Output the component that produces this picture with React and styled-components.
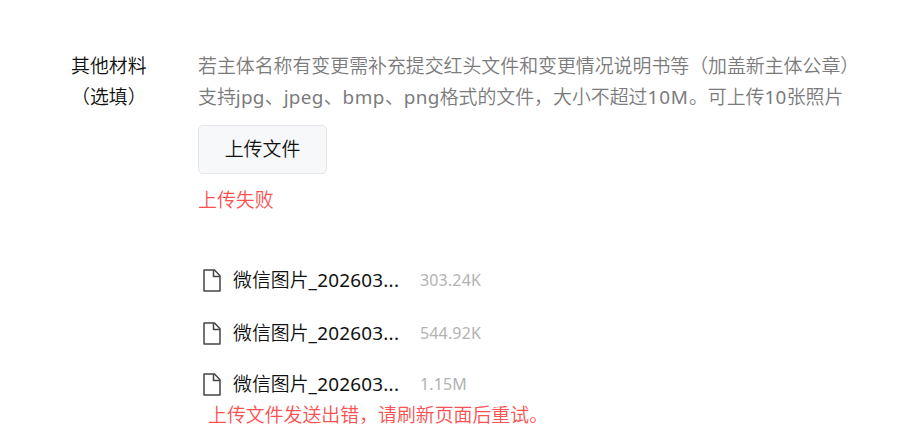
import React from "react";
import styled, { createGlobalStyle } from "styled-components";

const GlobalStyle = createGlobalStyle`
  * { box-sizing: border-box; }
  body {
    margin: 0;
    background: #fff;
    font-family: "Noto Sans", "Noto Sans CJK SC", sans-serif;
    font-size: 18.9px;
    font-weight: 350;
    line-height: 31px;
    color: #111;
  }
`;

const Field = styled.section`
  display: flex;
  width: 924px;
  height: 443px;
  padding: 51px 0 0 71px;
  overflow: hidden;
  white-space: nowrap;
`;

const Label = styled.div`
  width: 76px;
  margin-right: 51px;
`;

const LabelLine = styled.p`
  margin: 0;
`;

const Content = styled.div`
  flex: 1;
`;

const Hint = styled.p`
  margin: 0;
  color: #7b7b7b;
`;

const Latin = styled.span`
  font-weight: 400;
  letter-spacing: ${(p) => p.$spacing ?? 0.3}px;
`;

const UploadButton = styled.button`
  display: block;
  width: 129px;
  height: 49px;
  margin: 12px 0 11px;
  padding: 0;
  border: 1px solid #e3e5e8;
  border-radius: 5px;
  background: #f6f8fa;
  color: #111;
  font: inherit;
`;

const ErrorText = styled.p`
  margin: 0 0 0 ${(p) => p.$indent || 0}px;
  color: #fa5151;
`;

const FileList = styled.ul`
  display: grid;
  grid-template-rows: 53px 51px 31px;
  margin: 49px 0 0;
  padding: 0;
  list-style: none;
`;

const FileRow = styled.li`
  display: flex;
  height: 31px;
  padding-left: 5px;
`;

const FileIcon = styled.svg`
  width: 18px;
  height: 23px;
  margin: 4px 12px 0 0;
  fill: none;
  stroke: #444;
  stroke-width: 1.5;
  stroke-linejoin: round;
`;

const FileName = styled.span`
  width: 187px;
`;

const FileSize = styled.span`
  color: #b2b2b2;
  font-size: 16px;
  font-weight: 400;
  letter-spacing: 0.15px;
`;

const files = [
  { id: 1, size: "303.24K" },
  { id: 2, size: "544.92K" },
  { id: 3, size: "1.15M" },
];

export default function App() {
  return (
    <>
      <GlobalStyle />
      <Field>
        <Label>
          <LabelLine>其他材料</LabelLine>
          <LabelLine>（选填）</LabelLine>
        </Label>
        <Content>
          <Hint>若主体名称有变更需补充提交红头文件和变更情况说明书等（加盖新主体公章）</Hint>
          <Hint>
            支持<Latin>jpg</Latin>、<Latin>jpeg</Latin>、<Latin $spacing={0.5}>bmp</Latin>、<Latin>png</Latin>格式的文件，大小不超过<Latin $spacing={0.9}>10M</Latin>。可上传<Latin>10</Latin>张照片
          </Hint>
          <UploadButton type="button">上传文件</UploadButton>
          <ErrorText>上传失败</ErrorText>
          <FileList>
            {files.map((file) => (
              <FileRow key={file.id}>
                <FileIcon viewBox="0 0 18 23">
                  <path d="M1 1H11.5L17 6.8V22H1Z" />
                  <path d="M10.5 1V7.5H17" />
                </FileIcon>
                <FileName>微信图片<Latin $spacing={0.22}>_202603...</Latin></FileName>
                <FileSize>{file.size}</FileSize>
              </FileRow>
            ))}
          </FileList>
          <ErrorText $indent={10}>上传文件发送出错，请刷新页面后重试。</ErrorText>
        </Content>
      </Field>
    </>
  );
}
